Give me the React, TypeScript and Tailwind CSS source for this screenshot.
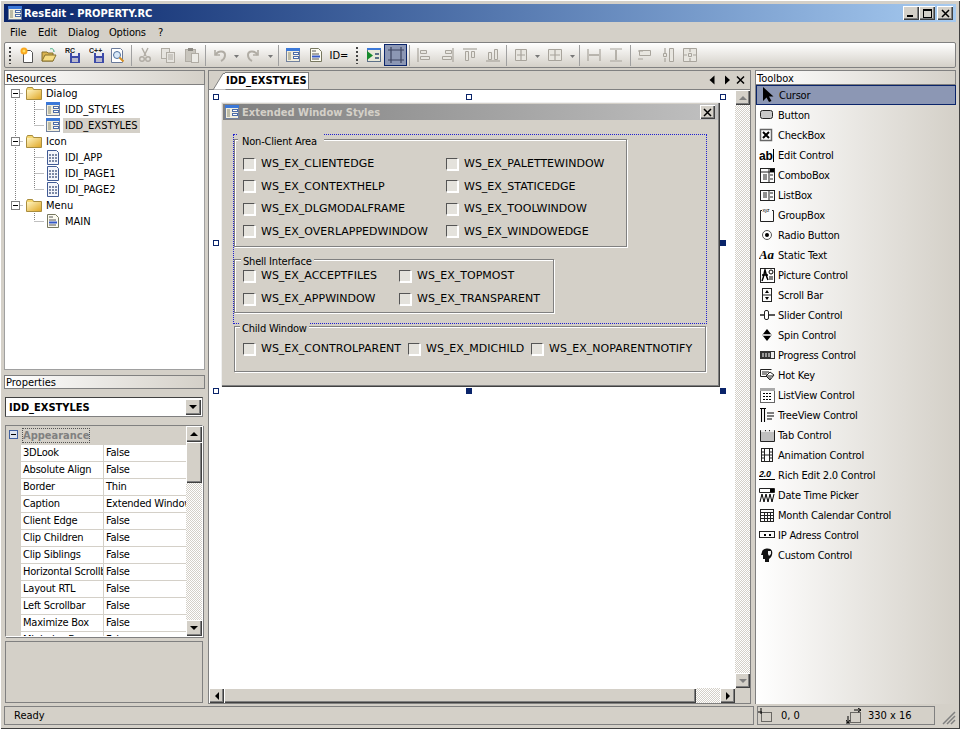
import type { ReactNode } from 'react'

const raised = 'shadow-[inset_1px_1px_0_#fff,inset_-1px_-1px_0_#404040,inset_-2px_-2px_0_#808080]'
const checker = 'bg-[repeating-conic-gradient(#d4d0c8_0_25%,#fff_0_50%)] bg-[length:2px_2px]'
const panelHead = 'border border-[#808080] bg-gradient-to-r from-white to-[#d4d0c8] flex items-center pl-px'

function Ic({ children, w = 16, h = 16 }: { children: ReactNode; w?: number; h?: number }) {
  return (
    <svg width={w} height={h} viewBox={`0 0 ${w} ${h}`} className="shrink-0 block" fill="none">
      {children}
    </svg>
  )
}

/* resource tree icons */
const DialogIcon = () => (
  <Ic>
    <rect x="1.5" y="1.5" width="13" height="13" fill="#f2eedd" stroke="#71819e" />
    <rect x="1" y="1" width="14" height="3" fill="#3b78d8" />
    <path d="M3 6h3M3 8h3M3 10h3M3 12h3" stroke="#8a8a70" />
    <rect x="8.5" y="5.5" width="5" height="2" fill="#fff" stroke="#4d6da8" />
    <rect x="8.5" y="9.5" width="5" height="2" fill="#fff" stroke="#4d6da8" />
  </Ic>
)
const FolderIcon = () => (
  <Ic>
    <defs>
      <linearGradient id="fold" x1="0" y1="0" x2="1" y2="1">
        <stop offset="0" stopColor="#fff4c0" />
        <stop offset="1" stopColor="#e0a828" />
      </linearGradient>
    </defs>
    <path d="M.5 4.500l1-2h5l1 2h8v10H.5z" fill="#f6d76f" stroke="#a98d3e" />
    <rect x="1" y="5" width="14" height="9" fill="url(#fold)" />
  </Ic>
)
const IconRes = () => (
  <Ic>
    <path d="M2.5 1.5h9l2 2v12h-11z" fill="#f3f5fb" stroke="#405a94" />
    <path d="M4 5h2v2H4zM7 5h2v2H7zM10 5h2v2h-2zM4 8h2v2H4zM7 8h2v2H7zM10 8h2v2h-2zM4 11h2v2H4zM7 11h2v2H7zM10 11h2v2h-2z" fill="#7d8aa6" />
  </Ic>
)
const MenuRes = () => (
  <Ic>
    <path d="M2.5 1.5h8l3 3v10h-11z" fill="#fbfaf0" stroke="#77775f" />
    <path d="M4 4h4M4 7h7M4 12h7" stroke="#555" />
    <rect x="4" y="8.5" width="8" height="2" fill="#3558c8" />
  </Ic>
)
const Disk = () => (
  <>
    <rect x="5" y="6" width="10" height="10" fill="#3c4aa8" />
    <rect x="7" y="6" width="6" height="3" fill="#e8e8f0" />
    <rect x="7" y="11" width="6" height="4" fill="#b8b8cc" />
  </>
)

/* toolbar icons */
const g = '#b0aca4'
const Cut = () => (
  <Ic>
    <path d="M5 1l4 8M11 1L7 9" stroke={g} strokeWidth="1.4" />
    <circle cx="5" cy="12" r="2.3" stroke={g} strokeWidth="1.4" />
    <circle cx="11" cy="12" r="2.3" stroke={g} strokeWidth="1.4" />
  </Ic>
)
const Copy = () => (
  <Ic>
    <rect x="1.5" y="1.5" width="8" height="10" fill="#e6e4df" stroke={g} />
    <rect x="6.5" y="5.5" width="8" height="10" fill="#e6e4df" stroke={g} />
    <path d="M8 8h5M8 10h5M8 12h5" stroke={g} />
  </Ic>
)
const Paste = () => (
  <Ic>
    <rect x="1.5" y="2.5" width="10" height="12" fill="#c8c5bd" stroke={g} />
    <rect x="4" y="1" width="5" height="3" fill="#8e8b84" />
    <rect x="7.5" y="6.5" width="7" height="9" fill="#ecebe6" stroke={g} />
  </Ic>
)
const Undo = () => (
  <Ic>
    <path d="M3 3v5h5" fill="none" stroke={g} strokeWidth="1.6" />
    <path d="M3.5 8C6 3 13 3.5 13 8c0 3-2 5-4 6" stroke={g} strokeWidth="2" />
  </Ic>
)
const Redo = () => (
  <Ic>
    <path d="M13 3v5H8" stroke={g} strokeWidth="1.6" />
    <path d="M12.5 8C10 3 3 3.5 3 8c0 3 2 5 4 6" stroke={g} strokeWidth="2" />
  </Ic>
)
const Drop = () => (
  <Ic w={7} h={16}>
    <path d="M1 8h5l-2.500 3z" fill="#777" />
  </Ic>
)
const Sep = () => <div className="w-px h-[21px] bg-[#a0a0a0]" />
const Grip = () => <div className="w-[2px] h-[17px] bg-[repeating-linear-gradient(#444_0_2px,transparent_2px_4px)]" />

const alignG = '#a8a49c'
const A = ({ d, f }: { d: string; f: string }) => (
  <Ic>
    <path d={f} fill="#e8e6e0" stroke={alignG} />
    <path d={d} stroke={alignG} strokeWidth="1.2" />
  </Ic>
)

function ToolBtn({ className, children }: { className: string; children?: ReactNode }) {
  return <div className={`${className} h-full flex items-center justify-center shrink-0`}>{children}</div>
}

function Toolbar() {
  return (
    <div className="h-[26px] border border-[#808080] rounded-[2px] bg-gradient-to-b from-white to-[#d4d0c8] flex items-center">
      <ToolBtn className="w-[10px]"><Grip /></ToolBtn>
      <ToolBtn className="w-[23px]">
        <Ic>
          <path d="M4.500 3.500h7l2 2v10h-9z" fill="#fff" stroke="#555" />
          <circle cx="5" cy="4" r="3.500" fill="#f9a820" />
          <circle cx="5" cy="4" r="1.500" fill="#ffe060" />
        </Ic>
      </ToolBtn>
      <ToolBtn className="w-[22px]">
        <Ic>
          <path d="M1 5h5l1 1h5v8H1z" fill="#d9b24e" stroke="#86702c" />
          <path d="M1 14l3-6h11l-3 6z" fill="#f6dc82" stroke="#86702c" />
          <path d="M9 2c2-1 4 0 4 3" stroke="#3a7" />
        </Ic>
      </ToolBtn>
      <ToolBtn className="w-[25px]">
        <Ic>
          <text x="0" y="5.500" fontSize="7" fontWeight="700" fill="#222" fontFamily="Liberation Sans">RC</text>
          <Disk />
        </Ic>
      </ToolBtn>
      <ToolBtn className="w-[23px]">
        <Ic>
          <text x="0" y="5.500" fontSize="7" fontWeight="700" fill="#222" fontFamily="Liberation Sans">C++</text>
          <Disk />
        </Ic>
      </ToolBtn>
      <ToolBtn className="w-[20px]">
        <Ic>
          <path d="M1.500 1.500h9l2 2v12h-11z" fill="#fff" stroke="#6a7a9a" />
          <circle cx="7" cy="8" r="3.500" fill="#d8e8f8" stroke="#50709c" />
          <path d="M9.500 10.500l4 4" stroke="#d89020" strokeWidth="2" />
        </Ic>
      </ToolBtn>
      <ToolBtn className="w-[6px]"><Sep /></ToolBtn>
      <ToolBtn className="w-[22px]"><Cut /></ToolBtn>
      <ToolBtn className="w-[24px]"><Copy /></ToolBtn>
      <ToolBtn className="w-[24px]"><Paste /></ToolBtn>
      <ToolBtn className="w-[3px]"><Sep /></ToolBtn>
      <ToolBtn className="w-[26px]"><Undo /></ToolBtn>
      <ToolBtn className="w-[7px]"><Drop /></ToolBtn>
      <ToolBtn className="w-[26px]"><Redo /></ToolBtn>
      <ToolBtn className="w-[9px]"><Drop /></ToolBtn>
      <ToolBtn className="w-[6px]"><Sep /></ToolBtn>
      <ToolBtn className="w-[23px]"><DialogIcon /></ToolBtn>
      <ToolBtn className="w-[24px]"><MenuRes /></ToolBtn>
      <ToolBtn className="w-[22px]"><span>ID=</span></ToolBtn>
      <ToolBtn className="w-[14px]"><Grip /></ToolBtn>
      <ToolBtn className="w-[20px]">
        <Ic>
          <rect x="1.500" y="1.500" width="13" height="13" fill="#e8e8d8" stroke="#5c7088" />
          <rect x="1" y="1" width="14" height="2" fill="#3b78d8" />
          <path d="M1 4l6 4.500L1 13z" fill="#168a2c" />
          <path d="M9 6h4v2H9zM9 10h4v2H9z" fill="#5c7088" />
        </Ic>
      </ToolBtn>
      <ToolBtn className="w-[23px]">
        <div className="w-full h-[22px] border border-[#0a246a] bg-[#8c97b4] flex items-center justify-center">
          <Ic>
            <path d="M0 3h16M0 13h16M3 0v16M13 0v16" stroke="#3c4460" strokeWidth="1.200" />
          </Ic>
        </div>
      </ToolBtn>
      <ToolBtn className="w-[4px]"><Sep /></ToolBtn>
      <ToolBtn className="w-[25px]"><A d="M2 1v14" f="M4.500 3.500h6v3h-6zM4.500 9.500h9v3h-9z" /></ToolBtn>
      <ToolBtn className="w-[22px]"><A d="M14 1v14" f="M6.500 3.500h6v3h-6zM3.500 9.500h9v3h-9z" /></ToolBtn>
      <ToolBtn className="w-[24px]"><A d="M1 2h14" f="M3.500 4.500h3v9h-3zM9.500 4.500h3v6h-3z" /></ToolBtn>
      <ToolBtn className="w-[22px]"><A d="M1 14h14" f="M3.500 5.500h3v7h-3zM9.500 2.500h3v10h-3z" /></ToolBtn>
      <ToolBtn className="w-[4px]"><Sep /></ToolBtn>
      <ToolBtn className="w-[25px]"><A d="M8 3v10M4 8h8" f="M2.500 2.500h11v11h-11z" /></ToolBtn>
      <ToolBtn className="w-[8px]"><Drop /></ToolBtn>
      <ToolBtn className="w-[27px]"><A d="M8 3v10M3 8h10" f="M1.500 2.500h13v11h-13z" /></ToolBtn>
      <ToolBtn className="w-[8px]"><Drop /></ToolBtn>
      <ToolBtn className="w-[6px]"><Sep /></ToolBtn>
      <ToolBtn className="w-[23px]"><A d="M2 2v12M14 2v12M3 8h10" f="M3 8h10" /></ToolBtn>
      <ToolBtn className="w-[22px]"><A d="M2 2h12M2 14h12M8 3v10" f="M8 3v10" /></ToolBtn>
      <ToolBtn className="w-[6px]"><Sep /></ToolBtn>
      <ToolBtn className="w-[24px]"><A d="M1 4h5M1 12h5" f="M2.500 3.500h11v5h-11z" /></ToolBtn>
      <ToolBtn className="w-[21px]"><A d="M5 1v5M5 11v4" f="M9.500 1.500h4v13h-4zM3.500 6.500h3v3h-3z" /></ToolBtn>
      <ToolBtn className="w-[24px]"><A d="M8 1v4M8 11v4M1 8h4M11 8h4" f="M6.500 6.500h3v3h-3zM1.500 1.500h13v13h-13z" /></ToolBtn>
    </div>
  )
}

function TreeRow({ indent, icon, label, open, selected }: { indent: boolean; icon: ReactNode; label: string; open?: boolean; selected?: boolean }) {
  return (
    <div className={`h-4 flex items-center ${indent ? 'pl-[40px]' : 'pl-[6px]'}`}>
      {!indent && (
        <div className="w-[9px] h-[9px] mr-[6px] border border-[#808080] bg-white flex items-center justify-center">
          {open && <div className="w-[5px] h-px bg-black" />}
        </div>
      )}
      {icon}
      <span className={`ml-[2px] h-[15px] leading-[15px] px-[2px] ${selected ? 'bg-[#d4d0c8]' : ''}`}>{label}</span>
    </div>
  )
}

const tri = {
  up: 'M4 10l4-4 4 4z',
  down: 'M4 6l4 4 4-4z',
  left: 'M10 4l-4 4 4 4z',
  right: 'M6 4l4 4-4 4z',
}

function ScrollBtn({ dir, off, big }: { dir: keyof typeof tri; off?: boolean; big?: boolean }) {
  return (
    <div className={`${big ? 'w-[16px] h-[16px]' : 'w-[15px] h-[15px]'} bg-[#d4d0c8] ${raised} shrink-0 flex items-center justify-center`}>
      <Ic><path d={tri[dir]} fill={off ? '#808080' : '#000'} /></Ic>
    </div>
  )
}

const props = [
  ['3DLook', 'False'], ['Absolute Align', 'False'], ['Border', 'Thin'], ['Caption', 'Extended Window Styles'],
  ['Client Edge', 'False'], ['Clip Children', 'False'], ['Clip Siblings', 'False'], ['Horizontal Scrollbar', 'False'],
  ['Layout RTL', 'False'], ['Left Scrollbar', 'False'], ['Maximize Box', 'False'], ['Minimize Box', 'False'],
]

function LeftColumn() {
  return (
    <div className="w-[201px] shrink-0 flex flex-col">
      <div className={`${panelHead} h-[15px] pt-px`}>Resources</div>
      <div className="relative h-[285px] bg-white border-x border-b border-[#a0a0a0] overflow-hidden">
        <svg className="absolute left-0 top-0" width="60" height="140" fill="none">
          <path d="M10.500 8v112M10.500 8.500h7M10.500 56.500h7M10.500 120.500h7M29.500 12v28M29.500 24.500h9M29.500 40.500h9M29.500 60v44M29.500 72.500h9M29.500 88.500h9M29.500 104.500h9M29.500 124v12M29.500 136.500h9" stroke="#808080" strokeDasharray="1 1" />
        </svg>
        <div className="relative">
          <TreeRow indent={false} open icon={<FolderIcon />} label="Dialog" />
          <TreeRow indent icon={<DialogIcon />} label="IDD_STYLES" />
          <TreeRow indent selected icon={<DialogIcon />} label="IDD_EXSTYLES" />
          <TreeRow indent={false} open icon={<FolderIcon />} label="Icon" />
          <TreeRow indent icon={<IconRes />} label="IDI_APP" />
          <TreeRow indent icon={<IconRes />} label="IDI_PAGE1" />
          <TreeRow indent icon={<IconRes />} label="IDI_PAGE2" />
          <TreeRow indent={false} open icon={<FolderIcon />} label="Menu" />
          <TreeRow indent icon={<MenuRes />} label="MAIN" />
        </div>
      </div>

      <div className={`${panelHead} h-[14px] mt-[5px]`}>Properties</div>

      <div className="h-[20px] mt-[8px] mx-px w-[198px] bg-white flex items-center justify-between border border-[#808080] border-t-[#404040] border-l-[#404040] pl-[3px] pr-px">
        <span className="font-bold">IDD_EXSTYLES</span>
        <ScrollBtn dir="down" big />
      </div>

      <div className="h-[212px] mt-[8px] mx-px w-[198px] flex border border-[#808080] border-b-white border-r-white shadow-[1px_1px_0_#808080] overflow-hidden">
        <div className="w-[15px] shrink-0">
          <div className="w-[9px] h-[9px] mt-[4px] ml-[3px] border border-[#4060a0] bg-[#dce4f0] flex items-center justify-center">
            <div className="w-[5px] h-px bg-black" />
          </div>
        </div>
        <div className="flex-1 min-w-0">
          <div className="h-[19px] flex items-center">
            <span className="ml-px px-px h-[15px] leading-[15px] font-bold text-[#808080] outline-dotted outline-1 outline-[#555] -outline-offset-1">Appearance</span>
          </div>
          {props.map(([k, v]) => (
            <div key={k} className="h-[17px] flex bg-white border-b border-[#d4d0c8] tracking-[-0.2px]">
              <div className="w-[83px] shrink-0 pl-[2px] border-r border-[#d4d0c8] overflow-hidden whitespace-nowrap leading-[16px]">{k}</div>
              <div className="flex-1 pl-[2px] overflow-hidden whitespace-nowrap leading-[16px]">{v}</div>
            </div>
          ))}
        </div>
        <div className="w-[16px] shrink-0 flex flex-col">
          <ScrollBtn dir="up" big />
          <div className={`h-[41px] w-[16px] bg-[#d4d0c8] ${raised}`} />
          <div className={`flex-1 ${checker}`} />
          <ScrollBtn dir="down" big />
        </div>
      </div>

      <div className="h-[62px] mt-[4px] mx-px w-[198px] border border-[#808080]" />
    </div>
  )
}

function Check({ label }: { label: string }) {
  return (
    <div className="flex items-center h-[13px]">
      <div className="w-[12px] h-[12px] shrink-0 bg-[#e4e2dc] border border-t-[#555] border-l-[#555] border-r-white border-b-white shadow-[1px_1px_0_#fff]" />
      <span className="ml-[6px] whitespace-nowrap font-['DejaVu_Sans',sans-serif]">{label}</span>
    </div>
  )
}

const etched = 'relative border border-[#808080] shadow-[inset_1px_1px_0_#fff,1px_1px_0_#fff]'

function Group({ title, className, labelClass, children }: { title: string; className: string; labelClass: string; children: ReactNode }) {
  return (
    <div className={`${etched} ${className}`}>
      <span className={`absolute leading-[13px] bg-[#d4d0c8] tracking-[-0.2px] ${labelClass}`}>{title}</span>
      {children}
    </div>
  )
}

function Handle({ className, filled }: { className: string; filled?: boolean }) {
  return <div className={`absolute w-[6px] h-[6px] border border-[#0a246a] ${filled ? 'bg-[#0a246a]' : 'bg-white'} ${className}`} />
}

function DialogBox() {
  return (
    <div className="relative w-[499px] h-[285px] ml-[12px] mt-[12px] bg-[#d4d0c8] shadow-[inset_1px_1px_0_#f0f0f0,inset_-1px_-1px_0_#404040,inset_-2px_-2px_0_#808080] pt-[2px] pl-[2px]">
      <div className="h-[16px] w-[495px] bg-gradient-to-r from-[#808080] to-[#c0c0c0] flex items-center pl-[1px] pr-[3px]">
        <DialogIcon />
        <span className="ml-[2px] font-bold text-[#d4d0c8]">Extended Window Styles</span>
        <div className={`ml-auto w-[15px] h-[14px] bg-[#d4d0c8] ${raised} flex items-center justify-center`}>
          <svg width="9" height="9" fill="none"><path d="M1 1l7 7M8 1L1 8" stroke="#000" strokeWidth="1.500" /></svg>
        </div>
      </div>

      {/* selection rectangle of the tab-order group */}
      <div className="absolute left-[12px] top-[32px] w-[474px] h-[190px] border border-dotted border-[#2020d0]" />

      <div className="pl-[11px] pt-[19px] flex flex-col">
        <Group title="Non-Client Area" labelClass="left-[3px] -top-[6px] w-[86px] h-[14px] pl-[4px] pt-[1px]" className="w-[393px] h-[108px] pt-[17px] pl-[8px]">
          <div className="grid grid-cols-[203px_1fr] gap-y-[9.670px]">
            <Check label="WS_EX_CLIENTEDGE" />
            <Check label="WS_EX_PALETTEWINDOW" />
            <Check label="WS_EX_CONTEXTHELP" />
            <Check label="WS_EX_STATICEDGE" />
            <Check label="WS_EX_DLGMODALFRAME" />
            <Check label="WS_EX_TOOLWINDOW" />
            <Check label="WS_EX_OVERLAPPEDWINDOW" />
            <Check label="WS_EX_WINDOWEDGE" />
          </div>
        </Group>
        <Group title="Shell Interface" labelClass="left-[6px] -top-[5px] px-[2px] h-[13px]" className="w-[320px] h-[54px] mt-[12px] pt-[9px] pl-[8px]">
          <div className="grid grid-cols-[156px_1fr] gap-y-[10px]">
            <Check label="WS_EX_ACCEPTFILES" />
            <Check label="WS_EX_TOPMOST" />
            <Check label="WS_EX_APPWINDOW" />
            <Check label="WS_EX_TRANSPARENT" />
          </div>
        </Group>
        <Group title="Child Window" labelClass="left-[5px] -top-[5px] px-[2px] h-[13px]" className="w-[472px] h-[46px] mt-[13px] pt-[15px] pl-[8px]">
          <div className="flex">
            <div className="w-[165px]"><Check label="WS_EX_CONTROLPARENT" /></div>
            <div className="w-[123px]"><Check label="WS_EX_MDICHILD" /></div>
            <Check label="WS_EX_NOPARENTNOTIFY" />
          </div>
        </Group>
      </div>

      <Handle className="-left-[8px] -top-[8px]" />
      <Handle className="left-[245px] -top-[8px]" />
      <Handle className="-right-[6px] -top-[8px]" />
      <Handle className="-left-[8px] top-[138px]" />
      <Handle filled className="-right-[6px] top-[138px]" />
      <Handle className="-left-[8px] -bottom-[7px]" />
      <Handle filled className="left-[245px] -bottom-[7px]" />
      <Handle filled className="-right-[6px] -bottom-[7px]" />
    </div>
  )
}

function CenterColumn() {
  return (
    <div className="w-[543px] shrink-0 flex flex-col">
      <div className="h-[20px] border-t border-x border-[#808080] relative flex items-end">
        <div className="absolute left-0 right-0 bottom-0 h-px bg-[#808080]" />
        <svg className="relative ml-[3px] block" width="14" height="18" fill="none">
          <path d="M14 1.500H11L1 18h13z" fill="#fff" stroke="#808080" />
        </svg>
        <div className="relative h-[17px] w-[84px] -ml-px bg-white border-t border-r border-[#808080] font-bold leading-[16px] pl-[1px] mb-px">IDD_EXSTYLES</div>
        <div className="absolute right-[2px] top-[3px] flex items-center">
          <Ic w={14} h={12}><path d="M8.500 1.500v9L3.500 6z" fill="#000" /></Ic>
          <Ic w={14} h={12}><path d="M5 1.500v9L10 6z" fill="#000" /></Ic>
          <Ic w={14} h={12}><path d="M3 2.500l7 7M10 2.500l-7 7" stroke="#000" strokeWidth="1.500" /></Ic>
        </div>
      </div>
      <div className="flex-1 flex flex-col border-x border-b border-[#808080] min-h-0">
        <div className="flex-1 flex min-h-0">
          <div className="flex-1 bg-white overflow-hidden"><DialogBox /></div>
          <div className="w-[15px] flex flex-col">
            <ScrollBtn dir="up" off />
            <div className={`flex-1 ${checker}`} />
            <ScrollBtn dir="down" off />
          </div>
        </div>
        <div className="h-[15px] flex">
          <ScrollBtn dir="left" />
          <div className={`w-[472px] bg-[#d4d0c8] ${raised}`} />
          <div className={`flex-1 ${checker}`} />
          <ScrollBtn dir="right" />
          <div className="w-[15px]" />
        </div>
      </div>
    </div>
  )
}

const b = '#222'
const toolbox: [string, ReactNode][] = [
  ['Button', <Ic><rect x="1.500" y="3.500" width="12" height="8" rx="2" fill="#c8c8c8" stroke={b} /></Ic>],
  ['CheckBox', <Ic><rect x="1.500" y="2.500" width="11" height="11" fill="#fff" stroke="#666" strokeWidth="1.500" /><path d="M4 5l6 6M10 5l-6 6" stroke="#000" strokeWidth="2" /></Ic>],
  ['Edit Control', <Ic><text x="0" y="13" fontSize="12" fontWeight="700" fill="#000" fontFamily="Liberation Sans">ab</text><path d="M14.500 2v13" stroke="#000" /></Ic>],
  ['ComboBox', <Ic><rect x="1.500" y="1.500" width="14" height="14" stroke={b} /><path d="M2 5h13M10 2v13M4 8h4M4 10h4M4 12h4M11 8h3M11 12h3" stroke={b} /><rect x="11" y="2" width="4" height="3" fill="#000" /></Ic>],
  ['ListBox', <Ic><rect x="1.500" y="3.500" width="14" height="10" stroke={b} /><path d="M10 4v9M4 6h4M4 8h4M4 10h4M11 6h3M11 10h3" stroke={b} /></Ic>],
  ['GroupBox', <Ic><path d="M3 3.500H1.500v11h13v-11H13" stroke={b} /><text x="3.500" y="5" fontSize="5" fill="#000" fontFamily="Liberation Sans">xyz</text></Ic>],
  ['Radio Button', <Ic><circle cx="8" cy="8" r="4.500" fill="#fff" stroke="#555" /><circle cx="8" cy="8" r="2" fill="#000" /></Ic>],
  ['Static Text', <Ic><text x="0" y="12" fontSize="13" fontStyle="italic" fontWeight="700" fill="#000" fontFamily="Liberation Serif">Aa</text></Ic>],
  ['Picture Control', <Ic><rect x="1.500" y="1.500" width="14" height="14" fill="#fff" stroke={b} /><path d="M3 14c2-4 2-8 3-11 1 3 1 6 3 10M3 8h6" stroke="#000" strokeWidth="1.500" /><circle cx="12" cy="5" r="2" stroke="#000" /><path d="M10 10h4M10 12h4" stroke="#000" /></Ic>],
  ['Scroll Bar', <Ic><rect x="3.500" y="1.500" width="9" height="13" stroke={b} /><path d="M4 8h8" stroke={b} /><path d="M8 3l2 3H6zM8 13l2-3H6z" fill="#000" /></Ic>],
  ['Slider Control', <Ic><rect x="5.500" y="3.500" width="4" height="9" rx="1.500" fill="#fff" stroke={b} /><path d="M1 8h4M10 8h6" stroke={b} strokeWidth="1.500" /></Ic>],
  ['Spin Control', <Ic><path d="M8 2l4 5H4zM8 14l4-5H4z" fill="#000" /><path d="M3 8h10" stroke="#888" /></Ic>],
  ['Progress Control', <Ic><rect x="1" y="4" width="15" height="8" fill="#333" /><path d="M3 6h2v4H3zM6 6h2v4H6zM9 6h2v4H9z" fill="#999" /><rect x="12" y="5" width="3" height="6" fill="#eee" /></Ic>],
  ['Hot Key', <Ic><path d="M1.500 2.500h11M1.500 2.500v7h6" stroke={b} /><path d="M3 5h7M3 7h5" stroke={b} /><path d="M7 9l4-4 4 3-4 5z" fill="#fff" stroke={b} /><path d="M8 9h6M9 11h3" stroke={b} /></Ic>],
  ['ListView Control', <Ic><rect x="1.500" y="1.500" width="14" height="14" fill="#fff" stroke="#666" /><rect x="1" y="1" width="15" height="3" fill="#aaa" /><path d="M4 6h2v1H4zM7 6h2v1H7zM10 6h2v1h-2zM4 9h2v1H4zM7 9h2v1H7zM10 9h2v1h-2zM4 12h2v1H4zM7 12h2v1H7zM10 12h2v1h-2z" fill="#000" /></Ic>],
  ['TreeView Control', <Ic><path d="M1 1.500h6M2.500 2v13M5.500 2v13M8 6h7M8 9h7M8 12h5" stroke="#000" strokeWidth="1.100" /></Ic>],
  ['Tab Control', <Ic><path d="M1.500 3.500h14v11h-14z" fill="#c0c0c0" stroke={b} /><path d="M2 3h4v2H2zM7 3h3v2H7zM11 3h4v2h-4z" fill="#eee" /></Ic>],
  ['Animation Control', <Ic><rect x="2.500" y="1.500" width="11" height="13" stroke={b} /><path d="M5.500 2v12M10.500 2v12M6 8h4M3 5h2M3 8h2M3 11h2M11 5h2M11 8h2M11 11h2" stroke={b} /></Ic>],
  ['Rich Edit 2.0 Control', <Ic><text x="0" y="10" fontSize="9" fontStyle="italic" fontWeight="700" fill="#000" fontFamily="Liberation Sans">2.0</text><path d="M0 12.500h16" stroke="#000" /></Ic>],
  ['Date Time Picker', <Ic><path d="M.5 1.500h15v4H.5z" fill="#fff" stroke={b} /><rect x="11" y="2" width="4" height="3" fill="#000" /><path d="M1 15l2-8 2 8 2-8 2 8 2-8 2 8 2-8" stroke="#000" /></Ic>],
  ['Month Calendar Control', <Ic><rect x="1.500" y="2.500" width="13" height="12" stroke={b} /><path d="M2 5.500h12M2 8.500h12M2 11.500h12M5.500 5v9M8.500 5v9M11.500 5v9" stroke={b} /></Ic>],
  ['IP Adress Control', <Ic><rect x=".5" y="4.500" width="15" height="6" stroke={b} /><path d="M5 7h2v2H5zM10 7h2v2h-2z" fill="#000" /></Ic>],
  ['Custom Control', <Ic><path d="M3 5c0-4 9-5 10-1 1 4-1 7-3 8v3H6v-3H4V8H2z" fill="#111" /><path d="M9 4h3v3l-2 2-1-2z" fill="#eee" /></Ic>],
]

function Toolbox() {
  return (
    <div className="w-[201px] shrink-0 flex flex-col h-[634px]">
      <div className={`${panelHead} h-[15px] pt-px`}>Toolbox</div>
      <div className="flex-1 border-l border-[#808080] bg-gradient-to-r from-white to-[#d4d0c8] tracking-[-0.2px]">
        <div className="h-5 flex items-center pl-[3px] border border-[#0a246a] bg-[#8c97b4]">
          <Ic><path d="M3 0v14l3.500-3.500L9 15l2.500-1-2.500-4.500h4.500z" fill="#000" /></Ic>
          <span className="ml-[3px]">Cursor</span>
        </div>
        {toolbox.map(([label, icon]) => (
          <div key={label} className="h-5 flex items-center pl-[3px]">
            {icon}
            <span className="ml-[3px] whitespace-nowrap">{label}</span>
          </div>
        ))}
      </div>
    </div>
  )
}

function WinBtn({ children, className }: { children: ReactNode; className?: string }) {
  return <div className={`w-[16px] h-[14px] bg-[#d4d0c8] ${raised} flex items-center justify-center ${className ?? ''}`}>{children}</div>
}

export default function App() {
  return (
    <div className="w-[960px] h-[729px] overflow-hidden bg-[#d4d0c8] px-1 pt-1 flex flex-col text-[11px] leading-[13px] text-black font-['DejaVu_Sans_Condensed','DejaVu_Sans',sans-serif] shadow-[inset_1px_1px_0_#fff,inset_-1px_-1px_0_#404040]">
      <div className="h-[18px] shrink-0 flex items-center pl-[3px] pr-[3px] bg-gradient-to-r from-[#0a246a] to-[#a6caf0]">
        <DialogIcon />
        <span className="ml-px font-bold text-white">ResEdit - PROPERTY.RC</span>
        <div className="ml-auto flex">
          <WinBtn><div className="w-[6px] h-[2px] bg-black mt-[6px] mr-[2px]" /></WinBtn>
          <WinBtn><div className="w-[9px] h-[9px] border border-black border-t-2" /></WinBtn>
          <WinBtn className="ml-[2px]">
            <svg width="9" height="9" fill="none"><path d="M1 1l7 7M8 1L1 8" stroke="#000" strokeWidth="1.500" /></svg>
          </WinBtn>
        </div>
      </div>

      <div className="h-[20px] shrink-0 flex items-center pl-[6px]">
        <span className="w-[28px]">File</span>
        <span className="w-[30px]">Edit</span>
        <span className="w-[41px]">Dialog</span>
        <span className="w-[49px] tracking-[-0.2px]">Options</span>
        <span>?</span>
      </div>

      <Toolbar />

      <div className="h-[634px] mt-[2px] shrink-0 flex">
        <LeftColumn />
        <div className="w-[3px]" />
        <CenterColumn />
        <div className="w-[4px]" />
        <Toolbox />
      </div>

      <div className="h-[19px] mt-[2px] shrink-0 flex">
        <div className="w-[750px] border border-[#808080] flex items-center pl-[9px]">Ready</div>
        <div className="w-[178px] ml-[3px] border border-[#808080] flex items-center">
          <Ic><path d="M0 4h4M3 0v6" stroke="#000" /><rect x="3.500" y="4.500" width="10" height="9" stroke="#000" strokeDasharray="1 1" /></Ic>
          <span className="ml-[7px] w-[65px]">0, 0</span>
          <Ic><path d="M4.500 4.500h10v10h-10z" stroke="#000" strokeDasharray="1 1" /><path d="M8 2h7M12 0l3 2-3 2M2 8v7M0 12l2 3 2-3M0 15h4" stroke="#000" /></Ic>
          <span className="ml-[6px]">330 x 16</span>
        </div>
        <svg className="ml-[5px] self-end" width="16" height="16" fill="none">
          <path d="M3 15L15 3M7 15l8-8M11 15l4-4" stroke="#808080" strokeWidth="1.500" />
        </svg>
      </div>
    </div>
  )
}
